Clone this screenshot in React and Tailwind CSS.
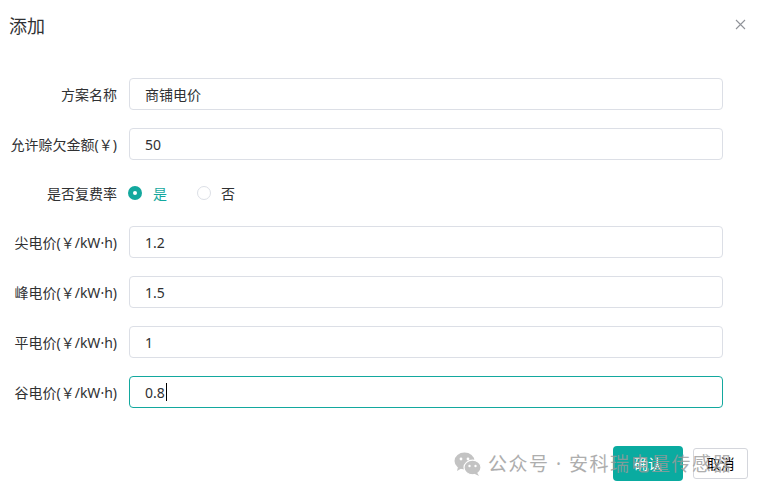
import React, { useState } from "react";

const fields = [
  { label: "方案名称", value: "商铺电价" },
  { label: "允许赊欠金额(￥)", value: "50" },
];

const prices = [
  { label: "尖电价(￥/kW·h)", value: "1.2" },
  { label: "峰电价(￥/kW·h)", value: "1.5" },
  { label: "平电价(￥/kW·h)", value: "1" },
  { label: "谷电价(￥/kW·h)", value: "0.8", focused: true },
];

const Row = ({ label, children, short }) => (
  <div className={`flex items-center ${short ? "h-[30px]" : "h-[32px]"}`}>
    <div className="w-[117px] shrink-0 flex justify-end text-[14px] text-[#303133] whitespace-nowrap">
      {label}
    </div>
    <div className="ml-[12px]">{children}</div>
  </div>
);

const Field = ({ value, focused }) => (
  <div
    className={`w-[594px] h-[32px] rounded-[4px] border bg-white flex items-center px-[15px] text-[14px] text-[#303133] ${
      focused ? "border-[#13a89e]" : "border-[#dcdfe6]"
    }`}
  >
    {value}
    {focused && <span className="w-px h-[18px] bg-black ml-px" />}
  </div>
);

const App = () => {
  const [multi, setMulti] = useState(true);

  return (
    <div
      className="relative w-[760px] h-[496px] bg-white overflow-hidden"
      style={{ fontFamily: '"Noto Sans", "Noto Sans CJK SC", sans-serif' }}
    >
      {/* Header */}
      <div className="flex items-center justify-between h-[52px] pl-[9px] pr-[14px]">
        <div className="text-[18px] text-[#303133]">添加</div>
        <svg width="11" height="11" viewBox="0 0 11 11" className="mb-[4px]">
          <path d="M1 1 L10 10 M10 1 L1 10" stroke="#909399" strokeWidth="1.1" />
        </svg>
      </div>

      {/* Form */}
      <div className="flex flex-col gap-[18px] mt-[26px]">
        {fields.map((f) => (
          <Row key={f.label} label={f.label}>
            <Field value={f.value} />
          </Row>
        ))}
        <Row label="是否复费率" short>
          <div className="flex items-center text-[14px] -ml-[1px]">
            <button onClick={() => setMulti(true)} className="flex items-center">
              <span
                className={`w-[14px] h-[14px] rounded-full flex items-center justify-center ${
                  multi ? "bg-[#13a89e]" : "border border-[#dcdfe6]"
                }`}
              >
                {multi && <span className="w-[4px] h-[4px] rounded-full bg-white" />}
              </span>
              <span className={`ml-[11px] ${multi ? "text-[#13a89e]" : "text-[#303133]"}`}>是</span>
            </button>
            <button onClick={() => setMulti(false)} className="flex items-center ml-[30px]">
              <span
                className={`w-[14px] h-[14px] rounded-full flex items-center justify-center ${
                  !multi ? "bg-[#13a89e]" : "border border-[#dcdfe6]"
                }`}
              >
                {!multi && <span className="w-[4px] h-[4px] rounded-full bg-white" />}
              </span>
              <span className={`ml-[10px] ${!multi ? "text-[#13a89e]" : "text-[#303133]"}`}>否</span>
            </button>
          </div>
        </Row>
        {prices.map((p) => (
          <Row key={p.label} label={p.label}>
            <Field value={p.value} focused={p.focused} />
          </Row>
        ))}
      </div>

      {/* Footer */}
      <div className="flex justify-end items-center gap-[10px] mt-[38px] pr-[12px]">
        <button className="w-[70px] h-[35px] rounded-[4px] bg-[#0aaba0] text-white text-[14px]">
          确认
        </button>
        <button className="w-[55px] h-[31px] rounded-[3px] border border-[#d4d6dc] bg-white text-black text-[14px]">
          取消
        </button>
      </div>

      {/* Watermark */}
      <div className="absolute left-[454px] top-[450px] flex items-center pointer-events-none opacity-80">
        <svg width="28" height="26" viewBox="0 0 28 26">
          <ellipse cx="10.5" cy="10" rx="10" ry="8.5" fill="#b5b5b5" />
          <path d="M4 16 L3 20 L8 17 Z" fill="#b5b5b5" />
          <circle cx="7" cy="8" r="1.4" fill="#fff" />
          <circle cx="14" cy="8" r="1.4" fill="#fff" />
          <ellipse cx="18.5" cy="16.5" rx="8.5" ry="7.3" fill="#b5b5b5" stroke="#fff" strokeWidth="1.2" />
          <path d="M23 21.5 L25 25 L20 22.5 Z" fill="#b5b5b5" />
          <circle cx="15.5" cy="15" r="1.2" fill="#fff" />
          <circle cx="21.5" cy="15" r="1.2" fill="#fff" />
        </svg>
        <span className="ml-[6px] text-[19px] tracking-[1.5px] text-[#9a9a9a] whitespace-nowrap">
          公众号 · 安科瑞电量传感器
        </span>
      </div>
    </div>
  );
};

export default App;
